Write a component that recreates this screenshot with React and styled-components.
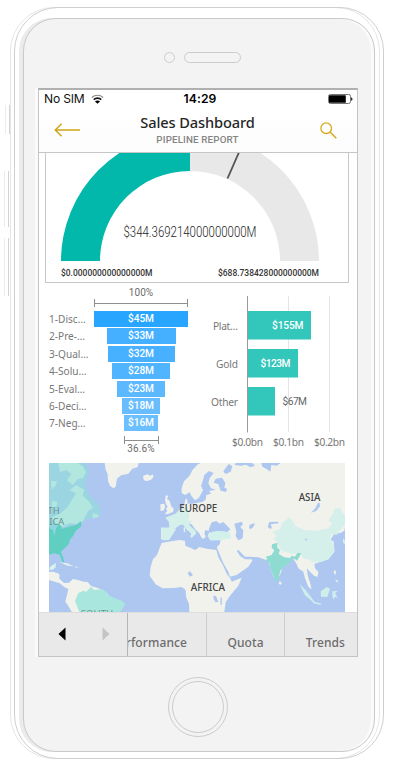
import React from "react";
import styled, { createGlobalStyle } from "styled-components";

const ui = '"Noto Sans", "Open Sans", sans-serif';
const din = 'Roboto, "Liberation Sans", sans-serif';

const GlobalStyle = createGlobalStyle`
  *, *::before, *::after { box-sizing: border-box; }
  body { margin: 0; background: #fff; }
`;

const Page = styled.main`
  width: 403px;
  height: 774px;
  overflow: hidden;
  padding: 7px 0 0 10px;
  font-family: ${ui};
`;

const Phone = styled.div`
  position: relative;
  width: 374px;
  height: 752px;
  padding: 11px 0 0 13px;
  &::before, &::after {
    content: "";
    position: absolute;
    top: 0;
    bottom: 0;
    width: 370px;
    border: 1px solid #e6e6e6;
    border-radius: 44px;
    pointer-events: none;
  }
  &::before { left: 0; }
  &::after { left: 4px; border-color: #cfcfcf; }
`;

const SideButton = styled.i`
  position: absolute;
  left: ${(p) => p.$x}px;
  top: ${(p) => p.$y}px;
  width: 5px;
  height: ${(p) => p.$h}px;
  border: solid;
  border-width: 0 1px 0 1px;
  border-color: #d2d2d2;
  border-left-color: #ececec;
`;

const Face = styled.div`
  width: 352px;
  height: 734px;
  display: flex;
  flex-direction: column;
  border: 1px solid #c9c9c9;
  border-radius: 33px;
  background: #f3f3f3;
  box-shadow: -4px 0 0 #ebebeb, inset -3px 0 0 #fbfbfb;
  padding: 0 0 0 14px;
`;

const Earpiece = styled.div`
  height: 69px;
  display: flex;
  gap: 9px;
  padding: 33px 0 0 126px;
`;

const Camera = styled.span`
  width: 11px;
  height: 11px;
  border: 1px solid #cccccc;
  border-radius: 50%;
`;

const Speaker = styled.span`
  width: 57px;
  height: 11px;
  border: 1px solid #cccccc;
  border-radius: 6px;
`;

const Screen = styled.section`
  width: 320px;
  height: 569px;
  display: flex;
  flex-direction: column;
  background: #fff;
  border: 1px solid #c4c4c4;
  border-top: 2px solid #b0b0b0;
  box-shadow: -3px 0 0 #fafafa;
`;

const HomeButton = styled.div`
  width: 60px;
  height: 60px;
  margin: 20px 0 0 130px;
  padding: 3px;
  border: 1px solid #cccccc;
  border-radius: 50%;
  display: flex;
  &::after {
    content: "";
    flex: 1;
    border: 1px solid #cccccc;
    border-radius: 50%;
  }
`;

const StatusBar = styled.div`
  height: 18px;
  display: grid;
  grid-template-columns: 1fr auto 1fr;
  align-items: center;
  padding: 0 4px 0 5px;
  font: 12.1px/18px Inter, "Liberation Sans", sans-serif;
  color: #111;
`;

const Carrier = styled.div`
  display: flex;
  align-items: center;
  gap: 6px;
  letter-spacing: -0.2px;
`;

const Clock = styled.span`
  font-weight: 600;
  font-size: 12.2px;
  letter-spacing: 0.05px;
  padding-left: 3px;
  color: #000;
`;

const BatterySlot = styled.div`
  display: flex;
  justify-content: flex-end;
`;

const TitleBar = styled.header`
  height: 45px;
  display: flex;
  align-items: center;
  justify-content: space-between;
  padding: 0 20px 0 15px;
  border-bottom: 1px solid #c6c6c6;
  background: linear-gradient(#ffffff, #fcfcfc);
`;

const Titles = styled.div`
  display: flex;
  flex-direction: column;
  align-items: center;
  margin-left: -6px;
`;

const Title = styled.h1`
  margin: 0;
  font: 500 14.6px/19px ${ui};
  letter-spacing: -0.12px;
  color: #262626;
`;

const Subtitle = styled.h2`
  margin: 0;
  font: 500 9.8px/15px ${din};
  letter-spacing: 0.13px;
  color: #858585;
`;

const Content = styled.div`
  height: 459px;
  overflow: hidden;
  display: flex;
  flex-direction: column;
  padding-left: 6px;
`;

const GaugeCard = styled.div`
  width: 304px;
  height: 130px;
  border: 1px solid #c8c8c8;
  border-top: 0;
  display: flex;
`;

const Charts = styled.div`
  height: 180px;
  display: flex;
`;

const Funnel = styled.div`
  width: 150px;
  padding-left: 4px;
  padding-top: 3px;
`;

const Bracket = styled.div`
  display: flex;
  flex-direction: ${(p) => (p.$below ? "column-reverse" : "column")};
  align-items: center;
  width: 94px;
  margin-left: 45px;
  margin-top: ${(p) => (p.$below ? 4 : 0)}px;
`;

const Span = styled.div`
  width: ${(p) => p.$w}px;
  height: 8px;
  border: solid #8e8e8e;
  border-width: 0 1px;
  display: flex;
  align-items: center;
  &::after {
    content: "";
    flex: 1;
    border-top: 1px solid #8e8e8e;
  }
`;

const Percent = styled.span`
  font: 10px/${(p) => (p.$tight ? 10 : 13)}px ${din};
  letter-spacing: 0.1px;
  color: #6d6d6d;
`;

const Stages = styled.div`
  padding-top: 3.2px;
`;

const Stage = styled.div`
  display: grid;
  grid-template-columns: 45px 94px;
  align-items: center;
  justify-items: start;
  height: 17.43px;
`;

const StageName = styled.span`
  font-size: 10.1px;
  line-height: 16px;
  white-space: nowrap;
  color: #777;
`;

const StageBar = styled.span`
  justify-self: center;
  width: ${(p) => p.$w}px;
  height: 15.9px;
  display: flex;
  align-items: center;
  justify-content: center;
  background: ${(p) => p.$c};
  font: 500 10.2px/16px ${din};
  letter-spacing: -0.1px;
  color: #fff;
`;

const BarChart = styled.svg`
  width: 160px;
  height: 175px;
`;

const MapView = styled.svg`
  flex: none;
  width: 296px;
  height: 149px;
  margin-left: 4px;
`;

const Tabs = styled.nav`
  flex: 1;
  display: flex;
  border-top: 1px solid #dedede;
  background: #e9e9e9;
`;

const Arrows = styled.div`
  width: 89px;
  display: flex;
  gap: 36px;
  padding: 14px 0 0 19px;
  border-right: 1px solid #b4b4b4;
`;

const Tab = styled.div`
  width: ${(p) => p.$w}px;
  flex: none;
  overflow: hidden;
  display: flex;
  justify-content: ${(p) => p.$align || "center"};
  padding: 19px ${(p) => p.$pad || 0}px 0 0;
  border-right: ${(p) => (p.$last ? 0 : 1)}px solid #cdcdcd;
  font: 500 12px/22px ${ui};
  letter-spacing: 0.1px;
  white-space: nowrap;
  color: #6c6c6c;
`;

const stages = [
  ["1-Disc…", "$45M", 94, "#28a5ff"],
  ["2-Pre-…", "$33M", 69, "#45b0ff"],
  ["3-Qual…", "$32M", 67, "#47b1ff"],
  ["4-Solu…", "$28M", 58, "#50b4ff"],
  ["5-Eval…", "$23M", 48, "#5cb8ff"],
  ["6-Deci…", "$18M", 38.5, "#68bdff"],
  ["7-Neg…", "$16M", 34.5, "#6cbfff"],
];

const Wifi = () => (
  <svg width="13" height="10" viewBox="0 0 13 10">
    <g fill="none" stroke="#111">
      <path d="M.9 3.5C4 .5 9 .5 12.1 3.5" stroke="#8a8a8a" strokeWidth="1.2" />
      <path d="M2.8 5.7c2-2 5.4-2 7.4 0" strokeWidth="1.8" />
    </g>
    <path d="M6.5 9.8 4 7.4c1.3-1.3 3.7-1.3 5 0z" fill="#000" />
  </svg>
);

const Battery = () => (
  <svg width="25" height="10" viewBox="0 0 25 10">
    <rect x=".5" y=".5" width="22" height="9" rx="1.8" fill="#fff" stroke="#777" />
    <rect x="1" y="1.2" width="16.8" height="7.6" rx=".6" />
    <path d="M23.2 3.2c1.7.5 1.7 3.1 0 3.6z" />
  </svg>
);

const Back = () => (
  <svg width="27" height="14" viewBox="0 0 27 14" fill="none" stroke="#cfa516" strokeWidth="1.5">
    <path d="M26 7H1.5M7.6 .8 1.3 7l6.3 6.2" />
  </svg>
);

const Search = () => (
  <svg width="17" height="17" viewBox="0 0 17 17" fill="none" stroke="#d4aa1c" strokeWidth="1.3">
    <circle cx="6.2" cy="6.2" r="5.3" />
    <path d="m10 10 6.3 6.3" strokeWidth="1.5" />
  </svg>
);

const Gauge = () => (
  <svg width="302" height="129" viewBox="46 153 302 129" fontFamily={din}>
    <path d="M61 261a129 129 0 0 1 129-129v39a90 90 0 0 0-90 90z" fill="#01b8aa" />
    <path d="M190 132a129 129 0 0 1 129 129h-39a90 90 0 0 0-90-90z" fill="#e8e8e8" />
    <path d="M227.5 178.5 240 150" stroke="#555" strokeWidth="1.8" />
    <text x="123.5" y="237" fontSize="14.2" fontWeight="300" fill="#222" textLength="133" lengthAdjust="spacingAndGlyphs">$344.369214000000000M</text>
    <text x="61" y="276" fontSize="8.8" fontWeight="500" fill="#333" textLength="91.5" lengthAdjust="spacingAndGlyphs">$0.000000000000000M</text>
    <text x="218" y="276" fontSize="8.8" fontWeight="500" fill="#333" textLength="101" lengthAdjust="spacingAndGlyphs">$688.738428000000000M</text>
  </svg>
);

const Segments = () => (
  <BarChart viewBox="195 283 160 175" fontSize="10.2">
    <path d="M288.5 296v136M329.5 296v136" stroke="#e4e4e4" />
    <g fill="#33c6bb">
      <path d="M248 311h63v28.6h-63zM248 349h50v28.6h-50zM248 387h27v28.6h-27z" />
    </g>
    <path d="M247.5 296v136.5" stroke="#9b9b9b" />
    <g fontFamily={ui} fill="#777" textAnchor="end">
      <text x="238" y="330" textLength="25">Plat…</text>
      <text x="238" y="368" textLength="22">Gold</text>
      <text x="238" y="406" textLength="27">Other</text>
    </g>
    <g fontFamily={din} fontWeight="500" fill="#fff">
      <text x="272" y="329" textLength="31.5">$155M</text>
      <text x="260.5" y="367" textLength="30">$123M</text>
      <text x="282.5" y="405" textLength="24.5" fill="#666" fontWeight="400">$67M</text>
    </g>
    <g fontFamily={ui} fill="#777">
      <text x="232" y="446" textLength="31">$0.0bn</text>
      <text x="273" y="446" textLength="31">$0.1bn</text>
      <text x="314" y="446" textLength="31">$0.2bn</text>
    </g>
  </BarChart>
);

const WorldMap = () => (
  <MapView viewBox="0 0 888 447" preserveAspectRatio="none">
    <path fill="#adc7f1" d="M0 0h888v447H0z" />
    <g fill="#f2f2ed">
      {/* Greenland, Iceland, Britain */}
      <path d="M167 0l3 20 6 14 1 20 6 14 10 8 7-5 4-24 12-10 22-5 12-15 16-5 3-12zM282 39l12-5 10 4 7-4 3 8-8 8-14 5-8-5zM350 97l8 2-4 9 8 5 4 15 8 9-2 10-18 7-7-1 8-9-4-7 5-6-5-7-3-14zM334 124l12-2 2 9-3 10-10 4z" />
      {/* Eurasia */}
      <path d="M398 75 405 55 421 39 431 20 447 4 455 0H888V192L886 203 870 212 852 215 855 246 856 266 838 289 813 297 796 303 798 316 808 326 806 341 796 339 783 326 773 316 776 336 783 361 788 379 778 371 768 346 763 326 748 316 741 299 728 281 718 301 700 316 693 336 683 353 673 341 663 311 660 296 646 289 628 283 603 281 588 281 568 261 563 263 573 279 588 289 608 289 610 293 598 311 563 336 543 341 538 326 523 301 513 276 503 253 512 244 515 232 484 232 476 219 482 206 470 200 466 210 470 222 462 228 456 222 452 212 440 200 428 184 418 180 420 190 432 200 442 212 436 216 428 224 424 220 428 212 412 198 402 184 392 186 378 196 380 200 368 218 360 230 346 232 336 228 336 194 362 194 360 176 350 164 366 158 380 152 396 136 406 128 408 112 414 106 416 122 430 122 462 116 470 110 472 96 486 92 480 84 500 80 486 76 478 60 482 46 494 30 480 24 466 36 462 52 456 68 462 82 450 104 438 112 428 100 422 88 408 96 398 90z" />
      {/* Africa */}
      <path d="M338 240 358 236 391 231 408 233 409 248 439 261 451 252 473 257 502 261 508 283 523 309 534 334 544 346 548 356 578 344 568 368 542 400 530 418 526 447H421L420 422 411 402 410 381 398 372 377 375 341 376 320 364 302 338 305 311 312 289 324 276 332 254z" />
      {/* Central and South America */}
      <path d="M0 327l12-1 18 6 2 8-2 6 15 14 15-1 12-11 14 3 18 5 12 1 10 12 20 6 18 7 8 18 38 17-2 23-14 13H72l-14-24-9-13 7-28 2-10-12-6-14-11-32-10z" />
      <path d="M692 354l6 5-2 6-7-2zM774 352l8 3 4 22-6-4z" />
    </g>
    {/* Inland seas, gulfs and lakes */}
    <g fill="#adc7f1">
      <path d="M482 192l6-14 14-4 10 8 11-5 12 12 9 10-9 8-33-2-17 5-7-5zM556 182l22-6 4 8-8 8 9 10-2 24-13 6-8-13 2-14zM602 185l16-5-5 12-7 6-6-2zM661 177l27-1 1 5-24 3 4 12-7 1-6-6zM416 330l7-5 9 12-10 4zM493 398l8 1 7 18-8 1-6-9zM515 402l4 3-1 22-4-3zM500 47l19-3 10 15-3 15 8 3-3 10-16-4-7-20-14-4zM526 20l13-17 11 6-5 17-14 7-8-6zM560 0h50l8 8-14 5-13-8-16 3-18-2zM637 0h58l-12 8-16-2-3 20-11-8-13-7zM807 119h5l1 11-11 14-16 5 13-13zM858 209l14 2 16 9v20l-18-6-5 10-9-11-14 1z" />
    </g>
    {/* Canada */}
    <path d="M0 0h105l14 19-4 26-8 16 6 21 21 31 15 9 8 27-16 15-30 5-16 13-12-6-18 12-28 10L0 188z" fill="#9bd5e2" />
    <path d="M28 0h58l17 12 8 16-9 18-16 2-14 18-18-14 13-20-16-11-18 6zM62 81l19-15 25 14-5 18 21 20 10 18-13 6-17 33-22 8-18-3-22 11-26-4-4-24 25-12 20-18 15-25 11-17zM5 53l19 2-3 11-12 14zM130 151l16 3 4 8-18 4zM9 114l16 3-3 13-14 4z" fill="#b2e7df" />
    {/* Countries by sales */}
    <path d="M0 180l26 2 12 8-1 8 29-9 17-4 12-10 3 14-18 15-7 14-9 10-5 16-15 14-8 9 8 20 2 13-6-3-8-22-16-4-18 5H0z" fill="#60cfc2" />
    <path d="M0 175l16 1 12 11-7 9-4 22-6-18-11-4z" fill="#8bd7dd" />
    <path d="M78 414l10-24 15-7 9 3 14-15 9 10 24-3 15 10 8 11 36 14 11 9-11 19-7 6H91l-5-13z" fill="#a9e6dd" />
    <path d="M5 310l16-10-1 13-9 7-11 1z" fill="#d7f3ec" />
    <path d="M336 194 362 194 360 176 350 164 366 158 380 152 396 136 416 134 422 160 416 172 430 174 420 182 424 190 438 202 442 212 436 216 428 224 424 220 428 212 412 198 402 184 392 186 378 196 380 200 368 218 360 230 346 232 338 228z" fill="#d5f0ea" />
    <path d="M475 220l16-14 28-1 23 3 5 18-31 5-28 1z" fill="#d2f1eb" />
    <path d="M670 206 693 199 700 179 721 163 735 179 738 188 766 201 803 203 838 196 850 179 838 173 853 151 856 137 873 134 881 151 888 156V186L878 196 863 216 848 213 843 223 855 246 856 266 838 289 818 296 793 299 783 291 763 286 753 269 728 273 700 263 690 253 686 236 673 229 683 219z" fill="#d5f0ea" />
    <path d="M767 226l8 3-4 5z" fill="#adc7f1" />
    <path d="M669 244 686 239 684 253 693 261 689 273 706 283 724 285 727 278 738 281 745 270 757 270 752 280 744 293 738 289 728 286 726 295 710 308 694 323 688 352 682 357 674 342 664 315 661 297 647 293 655 287 650 281 668 276 676 262 668 254z" fill="#8edbd2" />
    <path d="M752 363l17 17 29 38-9-3-22-20zM815 385l18-13 10 5-8 25-19-1zM791 415l28 7-6 3-21-5zM850 385l17-2-9 8 9 14-9-4-4 9-4-12zM882 225l6 8v12l-6-6z" fill="#cdeeea" />
    <path d="M855 322l6 2-1 12-6-5zM858 350l9 2-2 7z" fill="#eeeeea" />
    <path d="M404 193l4 1 1 14-5-2zM30 297l24 4 20 9-18-2zM79 310l12 4-15-1z" fill="#e5f2ee" />
    <g fontFamily={ui} fontSize="30" fontWeight="500" fill="#444">
      <text x="391" y="147" textLength="114" lengthAdjust="spacingAndGlyphs">EUROPE</text>
      <text x="749" y="113" textLength="65" lengthAdjust="spacingAndGlyphs">ASIA</text>
      <text x="425" y="384" textLength="103" lengthAdjust="spacingAndGlyphs">AFRICA</text>
      <g fill="#6b9491" fontWeight="400">
        <text x="32" y="153" textAnchor="end" fontSize="28">NORTH</text>
        <text x="46" y="187" textAnchor="end" fontSize="28">AMERICA</text>
        <text x="95" y="461" textLength="98" lengthAdjust="spacingAndGlyphs" fontSize="26">SOUTH</text>
      </g>
    </g>
  </MapView>
);

export default function App() {
  return (
    <Page>
      <GlobalStyle />
      <Phone>
        <SideButton $x={-5} $y={98} $h={29} />
        <SideButton $x={-6} $y={164} $h={56} />
        <SideButton $x={-6} $y={231} $h={58} />
        <Face>
          <Earpiece>
            <Camera />
            <Speaker />
          </Earpiece>
          <Screen>
            <StatusBar>
              <Carrier>No SIM <Wifi /></Carrier>
              <Clock>14:29</Clock>
              <BatterySlot><Battery /></BatterySlot>
            </StatusBar>
            <TitleBar>
              <Back />
              <Titles>
                <Title>Sales Dashboard</Title>
                <Subtitle>PIPELINE REPORT</Subtitle>
              </Titles>
              <Search />
            </TitleBar>
            <Content>
              <GaugeCard><Gauge /></GaugeCard>
              <Charts>
                <Funnel>
                  <Bracket>
                    <Percent>100%</Percent>
                    <Span $w={94} />
                  </Bracket>
                  <Stages>
                    {stages.map(([name, value, width, color]) => (
                      <Stage key={name}>
                        <StageName>{name}</StageName>
                        <StageBar $w={width} $c={color}>{value}</StageBar>
                      </Stage>
                    ))}
                  </Stages>
                  <Bracket $below>
                    <Percent $tight>36.6%</Percent>
                    <Span $w={35} />
                  </Bracket>
                </Funnel>
                <Segments />
              </Charts>
              <WorldMap />
            </Content>
            <Tabs>
              <Arrows>
                <svg width="8" height="14" viewBox="0 0 8 14"><path d="M7.5.5v13L.5 7z" /></svg>
                <svg width="8" height="14" viewBox="0 0 8 14"><path d="M.5.5v13l7-6.5z" fill="#c4c4c4" /></svg>
              </Arrows>
              <Tab $w={79} $align="flex-end" $pad={19}>Performance</Tab>
              <Tab $w={78}>Quota</Tab>
              <Tab $w={72} $last $align="flex-end" $pad={12}>Trends</Tab>
            </Tabs>
          </Screen>
          <HomeButton />
        </Face>
      </Phone>
    </Page>
  );
}
